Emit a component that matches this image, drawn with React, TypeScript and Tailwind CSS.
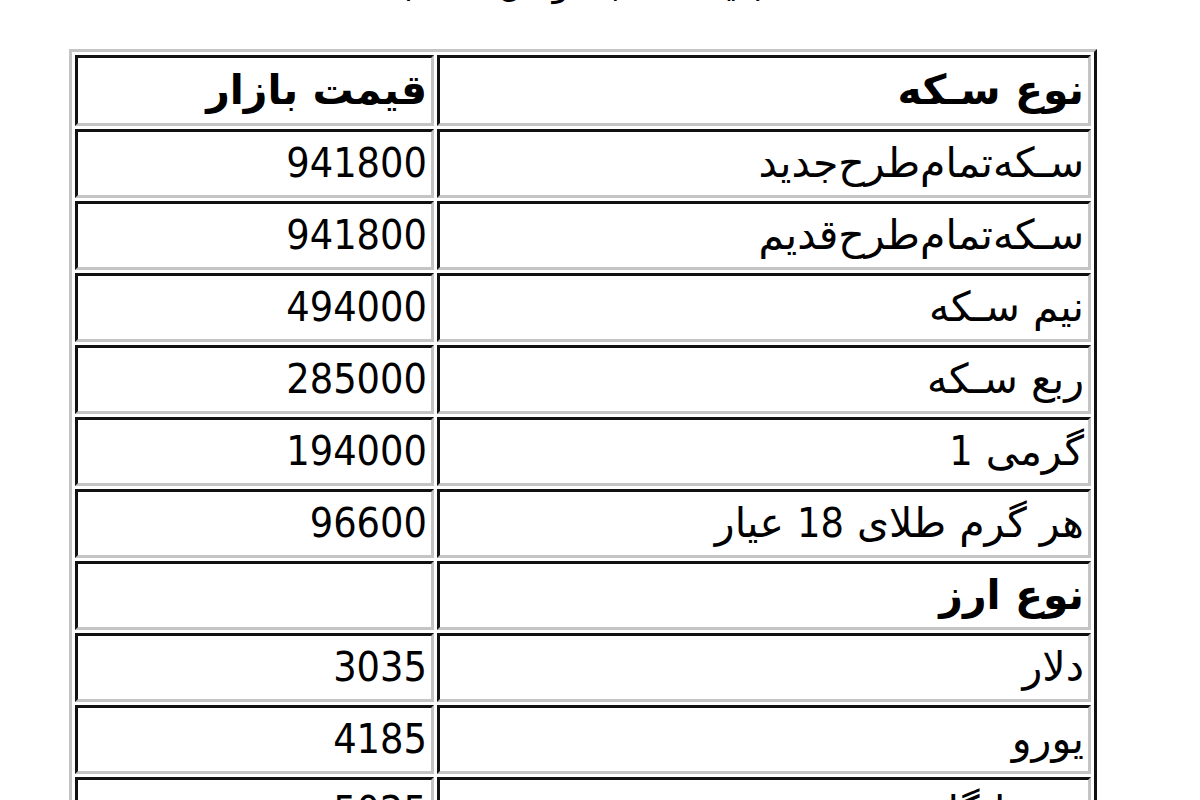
import React from "react";

const rows: { name: string; price: string; bold?: boolean }[] = [
  { name: "نوع سـکه", price: "قیمت بازار", bold: true },
  { name: "سـکه\u200cتمام\u200cطرح\u200cجدید", price: "941800" },
  { name: "سـکه\u200cتمام\u200cطرح\u200cقدیم", price: "941800" },
  { name: "نیم سـکه", price: "494000" },
  { name: "ربع سـکه", price: "285000" },
  { name: "1 گرمی", price: "194000" },
  { name: "هر گرم طلای 18 عیار", price: "96600" },
  { name: "نوع ارز", price: "", bold: true },
  { name: "دلار", price: "3035" },
  { name: "یورو", price: "4185" },
  { name: "پوند انگلیس", price: "5025" },
];

function Mixed({ text }: { text: string }) {
  const parts = text.split(/(\d+)/);
  return (
    <>
      {parts.map((p, i) =>
        /^\d+$/.test(p) ? (
          <span key={i} className="font-['DejaVu_Sans_Condensed','DejaVu_Sans',sans-serif]">
            {p}
          </span>
        ) : (
          <span key={i}>{p}</span>
        )
      )}
    </>
  );
}

const cellBase =
  "border-[3px] border-t-[#111] border-l-[#111] border-r-[#c4c4c4] border-b-[#c4c4c4] pr-[4px] text-right align-middle text-[41px] leading-none whitespace-nowrap";

export default function App() {
  return (
    <div className="w-[1200px] h-[800px] overflow-hidden bg-white text-black font-['DejaVu_Sans_Condensed','DejaVu_Sans',sans-serif]">
      <div className="ml-[69px] w-[1028px]">
        <div
          dir="rtl"
          className="-mt-[36px] h-[41px] text-center text-[35px] leading-[41px] font-normal whitespace-nowrap font-['DejaVu_Sans',sans-serif]"
        >
          (قیمت ها به تومان است)
        </div>
        <table className="mt-[44px] w-[1028px] table-fixed border-separate border-spacing-[3px] border-[3px] border-t-[#c4c4c4] border-l-[#c4c4c4] border-r-[#111] border-b-[#111]">
          <colgroup>
            <col className="w-[359px]" />
            <col className="w-[654px]" />
          </colgroup>
          <tbody>
            {rows.map((r, i) => (
              <tr key={i}>
                <td
                  className={`${i === 0 ? "h-[71px]" : "h-[69px]"} ${cellBase} ${
                    r.bold ? "font-bold font-['DejaVu_Sans',sans-serif]" : "font-normal"
                  }`}
                  dir={r.bold ? "rtl" : "ltr"}
                >
                  {r.price}
                </td>
                <td
                  className={`${i === 0 ? "h-[71px]" : "h-[69px]"} ${cellBase} font-['DejaVu_Sans',sans-serif] ${
                    r.bold ? "font-bold" : "font-normal"
                  }`}
                  dir="ltr"
                >
                  <Mixed text={r.name} />
                </td>
              </tr>
            ))}
          </tbody>
        </table>
      </div>
    </div>
  );
}
